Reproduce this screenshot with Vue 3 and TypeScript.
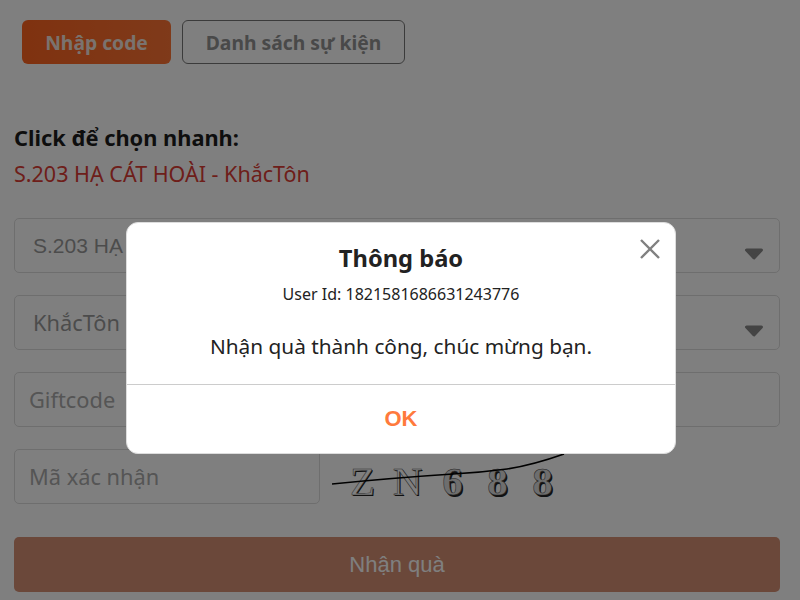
<script setup lang="ts">
const glyphs: { ch: string; digit: boolean }[] = [
  { ch: 'Z', digit: false },
  { ch: 'N', digit: false },
  { ch: '6', digit: true },
  { ch: '8', digit: true },
  { ch: '8', digit: true },
]
</script>

<template>
  <div class="page">
    <div class="tabs">
      <button class="tab active">Nhập code</button>
      <button class="tab">Danh sách sự kiện</button>
    </div>
    <div class="quick">
      <div class="quick-title">Click để chọn nhanh:</div>
      <div class="quick-item">S.203 HẠ CÁT HOÀI - KhắcTôn</div>
    </div>
    <div class="form">
      <div class="field select server">
        <span>S.203 HẠ CÁT HOÀI</span>
        <svg class="caret" viewBox="0 0 20 12" width="20" height="12"><path d="M2.5 2 H17.5 L10 10 Z" fill="#888" stroke="#888" stroke-width="3" stroke-linejoin="round" /></svg>
      </div>
      <div class="field select role">
        <span>KhắcTôn</span>
        <svg class="caret" viewBox="0 0 20 12" width="20" height="12"><path d="M2.5 2 H17.5 L10 10 Z" fill="#888" stroke="#888" stroke-width="3" stroke-linejoin="round" /></svg>
      </div>
      <div class="field input">Giftcode</div>
      <div class="captcha-row">
        <div class="field input code">Mã xác nhận</div>
        <div class="captcha">
          <span v-for="(g, i) in glyphs" :key="i" class="glyph" :class="{ digit: g.digit }">{{ g.ch }}</span>
          <svg class="strike" viewBox="0 0 240 40" width="240" height="40">
            <path d="M0 33 C50 28 90 25 121 23 C140 22 160 20 175 18 C195 15 215 9 232 3" fill="none" stroke="#000" stroke-width="1.6" />
          </svg>
        </div>
      </div>
      <div class="submit">Nhận quà</div>
    </div>

    <div class="overlay">
      <div class="modal">
        <svg class="close" viewBox="0 0 20 20" width="20" height="20">
          <path d="M1 1 L19 19 M19 1 L1 19" stroke="#808080" stroke-width="2.4" fill="none" />
        </svg>
        <div class="modal-body">
          <div class="modal-title">Thông báo</div>
          <div class="modal-user">User Id: 1821581686631243776</div>
          <div class="modal-msg">Nhận quà thành công, chúc mừng bạn.</div>
        </div>
        <div class="modal-ok">OK</div>
      </div>
    </div>
  </div>
</template>

<style>
html, body { margin: 0; background: #fff; overflow: hidden; }
</style>

<style scoped>
.page {
  height: 600px;
  box-sizing: border-box;
  padding: 20px 20px 0 14px;
  font-family: "Noto Sans", "Liberation Sans", sans-serif;
  color: #111;
  background: #fff;
}
.tabs { display: flex; gap: 11px; padding-left: 8px; }
.tab {
  width: 223px;
  height: 44px;
  box-sizing: border-box;
  padding: 0;
  border: 1px solid #777;
  border-radius: 6px;
  background: #fff;
  color: #929292;
  font: bold 19.3px "Noto Sans", sans-serif;
}
.tab.active {
  width: 149px;
  border: 0;
  background: linear-gradient(90deg, #ff6420, #ff7434);
  color: #f4e6de;
}
.quick { margin-top: 59px; height: 93px; }
.quick-title { font-size: 21.8px; font-weight: bold; line-height: 30px; color: #1c1c1c; }
.quick-item { margin-top: 6px; font-size: 21.5px; line-height: 30px; color: #dc3c34; }
.form { display: flex; flex-direction: column; gap: 22px; margin-top: 2px; }
.field {
  box-sizing: border-box;
  height: 55px;
  border: 1px solid #ddd;
  border-radius: 5px;
  display: flex;
  align-items: center;
  color: #aaa;
  font-size: 21.8px;
}
.select { justify-content: space-between; padding: 0 15px 0 18px; color: #999; }
.server { font-family: "Liberation Sans", sans-serif; font-size: 21px; }
.caret { margin-top: 16px; }
.input { padding-left: 14px; }
.captcha-row { display: flex; align-items: center; }
.code { width: 306px; }
.captcha {
  position: relative;
  box-sizing: border-box;
  width: 240px;
  height: 55px;
  margin-left: 12px;
  padding: 8px 0 0 8px;
  display: flex;
  align-items: center;
}
.glyph {
  width: 45px;
  text-align: center;
  font-family: "Liberation Serif", serif;
  font-size: 41px;
  line-height: 46px;
  color: #fff;
  -webkit-text-stroke: 0.5px #555;
  text-shadow: 1px 1px 0 #111;
}
.glyph.digit {
  font-weight: bold;
  color: #ddd;
  -webkit-text-stroke: 0.5px #444;
  text-shadow: 1.5px 1.5px 0 #222;
}
.strike { position: absolute; left: 0; top: 2px; }
.submit {
  height: 55px;
  margin-top: 11px;
  border-radius: 5px;
  background: #d69074;
  color: #fff;
  font: 22px/55px "Liberation Sans", sans-serif;
  text-align: center;
}
.overlay {
  position: fixed;
  inset: 0;
  z-index: 1;
  background: rgba(0, 0, 0, 0.5);
  display: flex;
  justify-content: center;
  align-items: flex-start;
  padding: 222px 0 0 2px;
  box-sizing: border-box;
}
.modal {
  position: relative;
  width: 550px;
  height: 232px;
  box-sizing: border-box;
  background: #fff;
  border-radius: 12px;
  border: 1px solid #ddd;
  display: flex;
  flex-direction: column;
}
.close { position: absolute; top: 16px; right: 15px; }
.modal-body { height: 162px; box-sizing: border-box; padding-top: 20px; text-align: center; border-bottom: 1px solid #ccc; }
.modal-title { font-size: 23.7px; font-weight: bold; line-height: 30px; color: #222; }
.modal-user { margin-top: 11px; font-size: 16px; line-height: 20px; color: #222; }
.modal-msg { margin-top: 27px; font-size: 20.8px; line-height: 30px; color: #222; }
.modal-ok {
  flex: 1;
  display: flex;
  align-items: center;
  justify-content: center;
  font: bold 22px "Liberation Sans", sans-serif;
  color: #ff7a3c;
}
</style>
